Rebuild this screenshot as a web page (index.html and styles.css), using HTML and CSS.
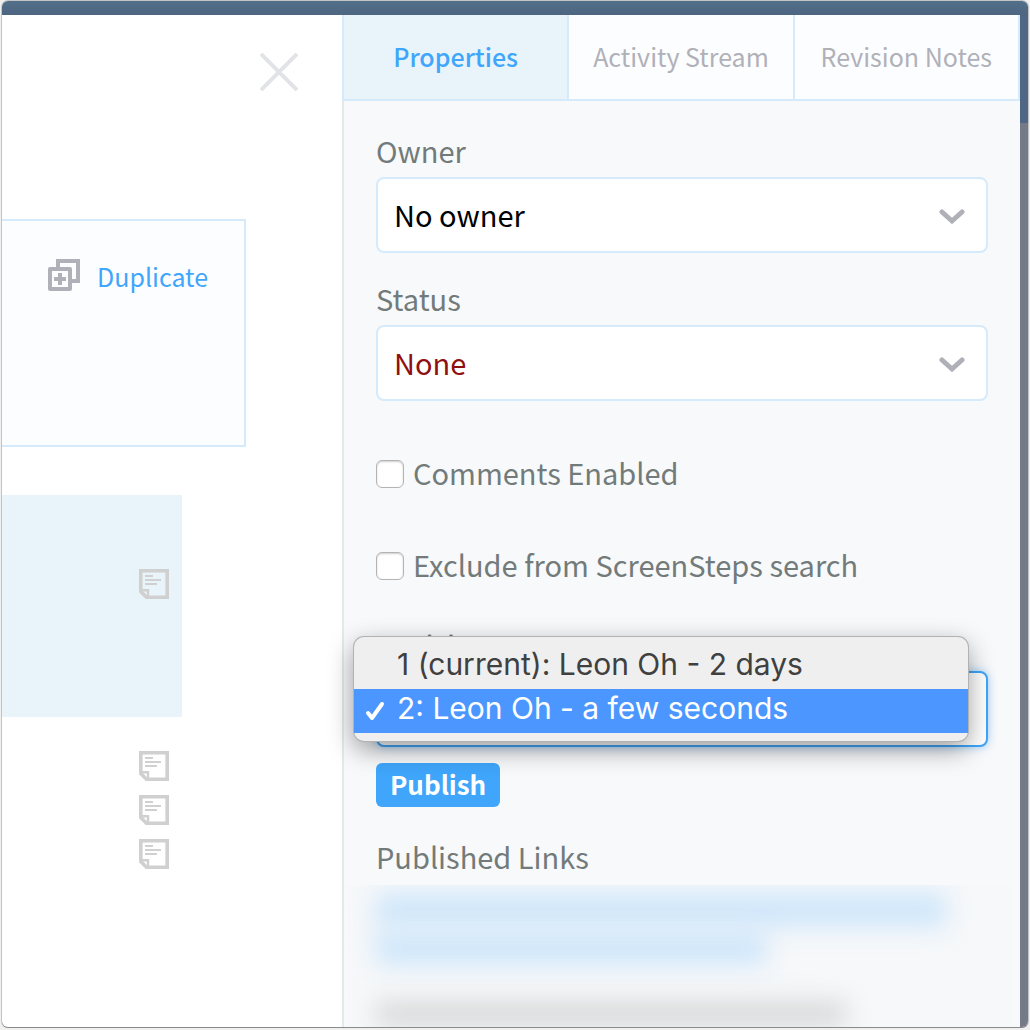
FILE: index.html
```html
<!DOCTYPE html>
<html lang="en">
<head>
    <meta charset="UTF-8">
    <meta name="viewport" content="width=device-width, initial-scale=1.0">
    <title>Article properties</title>
    <link rel="stylesheet" href="styles.css">
</head>
<body>

<svg class="symbols" aria-hidden="true">
    <symbol id="icon-note" viewBox="0 0 30 30">
        <path d="M1.8 1.8H28.2V28.2H7.5L1.8 22.5Z" fill="none" stroke="currentColor" stroke-width="3.6"/>
        <path d="M2 21.2H9V28.5" fill="none" stroke="currentColor" stroke-width="2.4"/>
        <path d="M6 7H14M6 11H22M6 15H18" fill="none" stroke="currentColor" stroke-width="2"/>
    </symbol>
    <symbol id="icon-chevron" viewBox="0 0 26 16">
        <path d="M3 3L13 12L23 3" fill="none" stroke="currentColor" stroke-width="5" stroke-linecap="round"/>
    </symbol>
</svg>

<div class="window">
    <header class="topbar"></header>
    <div class="layout">
        <main class="article">
            <div class="article-head">
                <button type="button" class="close" aria-label="Close">
                    <svg viewBox="0 0 38 38"><path d="M1 1L37 37M37 1L1 37" stroke="currentColor" stroke-width="4"/></svg>
                </button>
            </div>
            <section class="actions">
                <a href="#" class="duplicate">
                    <svg viewBox="0 0 32 32">
                        <path d="M10 8V2H30V22H24" fill="none" stroke="currentColor" stroke-width="4"/>
                        <path d="M2 10H22V30H2Z" fill="none" stroke="currentColor" stroke-width="4" stroke-linejoin="round"/>
                        <path d="M12 14V26M6 20H18" stroke="currentColor" stroke-width="4"/>
                    </svg>
                    Duplicate
                </a>
            </section>
            <section class="current">
                <svg class="note"><use href="#icon-note"/></svg>
            </section>
            <section class="notes">
                <svg class="note"><use href="#icon-note"/></svg>
                <svg class="note"><use href="#icon-note"/></svg>
                <svg class="note"><use href="#icon-note"/></svg>
            </section>
        </main>

        <aside class="panel">
            <nav class="tabs">
                <button type="button" class="tab active">Properties</button>
                <button type="button" class="tab">Activity Stream</button>
                <button type="button" class="tab">Revision Notes</button>
            </nav>
            <form class="properties">
                <div class="field">
                    <label for="owner">Owner</label>
                    <div class="select">
                        <select id="owner">
                            <option>No owner</option>
                        </select>
                        <svg><use href="#icon-chevron"/></svg>
                    </div>
                </div>
                <div class="field">
                    <label for="status">Status</label>
                    <div class="select">
                        <select id="status" class="status-none">
                            <option>None</option>
                        </select>
                        <svg><use href="#icon-chevron"/></svg>
                    </div>
                </div>
                <div class="checks">
                    <div class="check">
                        <input type="checkbox" id="comments">
                        <label for="comments">Comments Enabled</label>
                    </div>
                    <div class="check">
                        <input type="checkbox" id="exclude">
                        <label for="exclude">Exclude from ScreenSteps search</label>
                    </div>
                </div>
                <div class="field revision">
                    <label for="revision">Revision</label>
                    <div class="select">
                        <select id="revision" class="open">
                            <option></option>
                        </select>
                    </div>
                    <ul class="menu" role="listbox" aria-label="Revision">
                        <li role="option" aria-selected="false">1 (current): Leon Oh - 2 days</li>
                        <li role="option" aria-selected="true" class="selected">
                            <svg viewBox="0 0 20 20"><path d="M3 12L7 17L17 3" fill="none" stroke="currentColor" stroke-width="4" stroke-linecap="round" stroke-linejoin="round"/></svg>
                            2: Leon Oh - a few seconds
                        </li>
                    </ul>
                </div>
                <button type="submit" class="publish">Publish</button>
                <h3>Published Links</h3>
                <div class="links">
                    <span class="line long"></span>
                    <span class="line medium"></span>
                    <span class="line grey"></span>
                </div>
            </form>
        </aside>
        <div class="backdrop"></div>
    </div>
</div>

</body>
</html>
```
FILE: styles.css
```css
* {
    box-sizing: border-box;
}

body {
    margin: 0;
    padding: 1px 2px 3px;
    min-height: 100vh;
    display: flex;
    background-color: #f0f0ee;
    font-family: "Noto Sans CJK JP", "Open Sans", sans-serif;
    font-size: 29px;
    line-height: 34px;
    color: #727b7a;
}

button, select {
    font: inherit;
    cursor: pointer;
}

.symbols {
    position: absolute;
    width: 0;
    height: 0;
}

.window {
    flex: 1;
    display: flex;
    flex-direction: column;
    border-radius: 6px;
    overflow: hidden;
    background-color: white;
    box-shadow: 0 1px 0 #888b8d, 0 0 0 1px #c4c4c4;
}

.topbar {
    height: 14px;
    background: linear-gradient(#526f8a, #4d6581);
}

.layout {
    flex: 1;
    display: grid;
    grid-template-columns: 340px 1fr 8px;
}

.backdrop {
    background: linear-gradient(#4f6684 108px, #747a86 108px);
}

/* left side */
.article-head {
    height: 204px;
    padding: 38px 44px 0 0;
    text-align: right;
}

.close {
    width: 38px;
    height: 38px;
    padding: 0;
    border: none;
    background: none;
    color: #e2e3e6;
}

.close svg {
    display: block;
}

.actions {
    width: 244px;
    height: 228px;
    padding: 38px 36px 0 0;
    border: 2px solid #d5eafa;
    border-left: none;
    background-color: #fcfdff;
    font-size: 25px;
}

.duplicate {
    display: flex;
    justify-content: flex-end;
    gap: 17px;
    color: #3fa6fb;
    text-decoration: none;
}

.duplicate svg {
    width: 32px;
    height: 32px;
    color: #b0b1b8;
}

.note {
    display: block;
    width: 30px;
    height: 30px;
    color: #d0d0d0;
}

.current {
    width: 180px;
    height: 222px;
    margin-top: 48px;
    padding: 74px 0 0 137px;
    background-color: #e8f4f9;
}

.notes {
    display: flex;
    flex-direction: column;
    gap: 14px;
    padding: 34px 0 0 137px;
}

/* right panel */
.panel {
    display: flex;
    flex-direction: column;
    min-width: 0;
    background-color: #f8f9fb;
}

.tabs {
    display: flex;
    height: 86px;
    border-left: 2px solid #d5eafa;
}

.tab {
    flex: 1;
    padding: 0 0 2px;
    border: solid #d5eafa;
    border-width: 0 2px 2px 0;
    background-color: #fcfdff;
    color: #b0b1b8;
    font-size: 25px;
    white-space: nowrap;
}

.tab.active {
    background-color: #e8f4f9;
    color: #3fa6fb;
    font-weight: 500;
}

.properties {
    flex: 1;
    display: flex;
    flex-direction: column;
    padding: 32px 32px 0;
    border-left: 2px solid #e4eaec;
}

.field {
    position: relative;
    margin-bottom: 28px;
}

.field label {
    display: block;
    margin-bottom: 10px;
}

.select {
    position: relative;
}

.select select {
    display: block;
    width: 100%;
    height: 76px;
    padding: 0 48px 2px 16px;
    border: 2px solid #d5eafa;
    border-radius: 8px;
    appearance: none;
    background-color: white;
    color: black;
}

.select .status-none {
    color: #90100f;
}

.select .open {
    border-color: #3fa6fb;
    box-shadow: 0 0 8px rgba(63, 166, 251, 0.5);
}

.select svg {
    position: absolute;
    top: 32px;
    right: 23px;
    width: 26px;
    height: 16px;
    color: #b0b1b8;
    pointer-events: none;
}

.checks {
    display: flex;
    flex-direction: column;
    gap: 50px;
    margin: 24px 0 40px;
}

.check {
    display: flex;
    align-items: center;
    gap: 9px;
    height: 42px;
}

.check label {
    padding-bottom: 4px;
}

.check input {
    appearance: none;
    width: 28px;
    height: 28px;
    margin: 0;
    border: 1px solid #b4b4b4;
    border-radius: 6px;
    background-color: white;
    box-shadow: inset 0 1px 2px rgba(0, 0, 0, 0.2);
}

.revision {
    margin-bottom: 16px;
}

.menu {
    position: absolute;
    top: 10px;
    left: -22px;
    right: 20px;
    margin: 0;
    padding: 8px 0;
    border-radius: 10px;
    list-style: none;
    background-color: #efefef;
    box-shadow: 0 0 0 1px #b2b2b2, 0 8px 26px rgba(0, 0, 0, 0.4);
    color: #404040;
    font-family: Inter, "Liberation Sans", sans-serif;
    font-size: 30px;
    line-height: 38px;
}

.menu li {
    position: relative;
    height: 44px;
    padding-left: 43px;
    white-space: nowrap;
}

.menu .selected {
    background-color: #4c97ff;
    color: white;
}

.menu svg {
    position: absolute;
    top: 12px;
    left: 11px;
    width: 20px;
    height: 20px;
}

.publish {
    align-self: flex-start;
    height: 44px;
    padding: 0 14px 2px;
    border: none;
    border-radius: 6px;
    background-color: #3fa6fb;
    color: white;
    font-size: 26px;
    font-weight: 700;
}

h3 {
    margin: 32px 0 12px;
    font-size: inherit;
    font-weight: 400;
}

/* blurred out link list */
.links {
    flex: 1;
    display: flex;
    flex-direction: column;
    gap: 4px;
    min-height: 142px;
    margin: 0 -24px 0 -28px;
    padding: 8px 0 0 28px;
    overflow: hidden;
    background-color: #f6f8fa;
}

.line {
    flex: none;
    height: 34px;
    background-color: #cfe6fa;
    filter: blur(12px);
}

.long {
    width: 570px;
}

.medium {
    width: 390px;
}

.grey {
    width: 470px;
    height: 26px;
    margin-top: 32px;
    background-color: #d8d9d9;
}
```
